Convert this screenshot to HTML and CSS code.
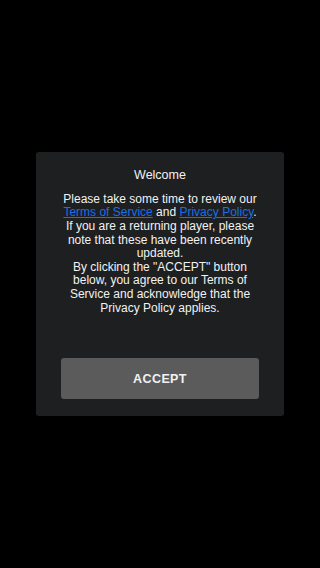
FILE: index.html
```html
<!DOCTYPE html>
<html lang="en">
<head>
    <meta charset="UTF-8">
    <meta name="viewport" content="width=device-width, initial-scale=1.0">
    <title>Welcome</title>
    <link rel="stylesheet" href="styles.css">
</head>
<body>
    <div class="dialog">
        <h2 class="title">Welcome</h2>
        <p class="message">
            Please take some time to review our<br>
            <a href="#">Terms of Service</a> and <a href="#">Privacy Policy</a>.<br>
            If you are a returning player, please<br>
            note that these have been recently<br>
            updated.<br>
            By clicking the "ACCEPT" button<br>
            below, you agree to our Terms of<br>
            Service and acknowledge that the<br>
            Privacy Policy applies.
        </p>
        <button class="accept">ACCEPT</button>
    </div>
</body>
</html>
```
FILE: styles.css
```css
html, body {
    margin: 0;
    height: 100%;
}

body {
    background: #000;
    font-family: "Liberation Sans", Arial, sans-serif;
    color: #f2f2f2;
    display: flex;
    align-items: center;
    justify-content: center;
}

.dialog {
    width: 248px;
    box-sizing: border-box;
    background: #1d1f21;
    border-radius: 3px;
    padding: 16px 25px 17px;
    text-align: center;
}

.title {
    font-size: 12.5px;
    font-weight: normal;
    line-height: 14px;
    margin: 0 0 11px;
}

.message {
    font-size: 12px;
    line-height: 13.6px;
    margin: 0 -15px 43px;
    white-space: nowrap;
}

.message a {
    color: #1a6fe6;
}

.accept {
    display: block;
    width: 100%;
    height: 41px;
    border: none;
    border-radius: 3px;
    background: #5b5b5b;
    color: #f2f2f2;
    font-family: inherit;
    font-size: 12.5px;
    font-weight: bold;
    letter-spacing: 0.4px;
}
```
